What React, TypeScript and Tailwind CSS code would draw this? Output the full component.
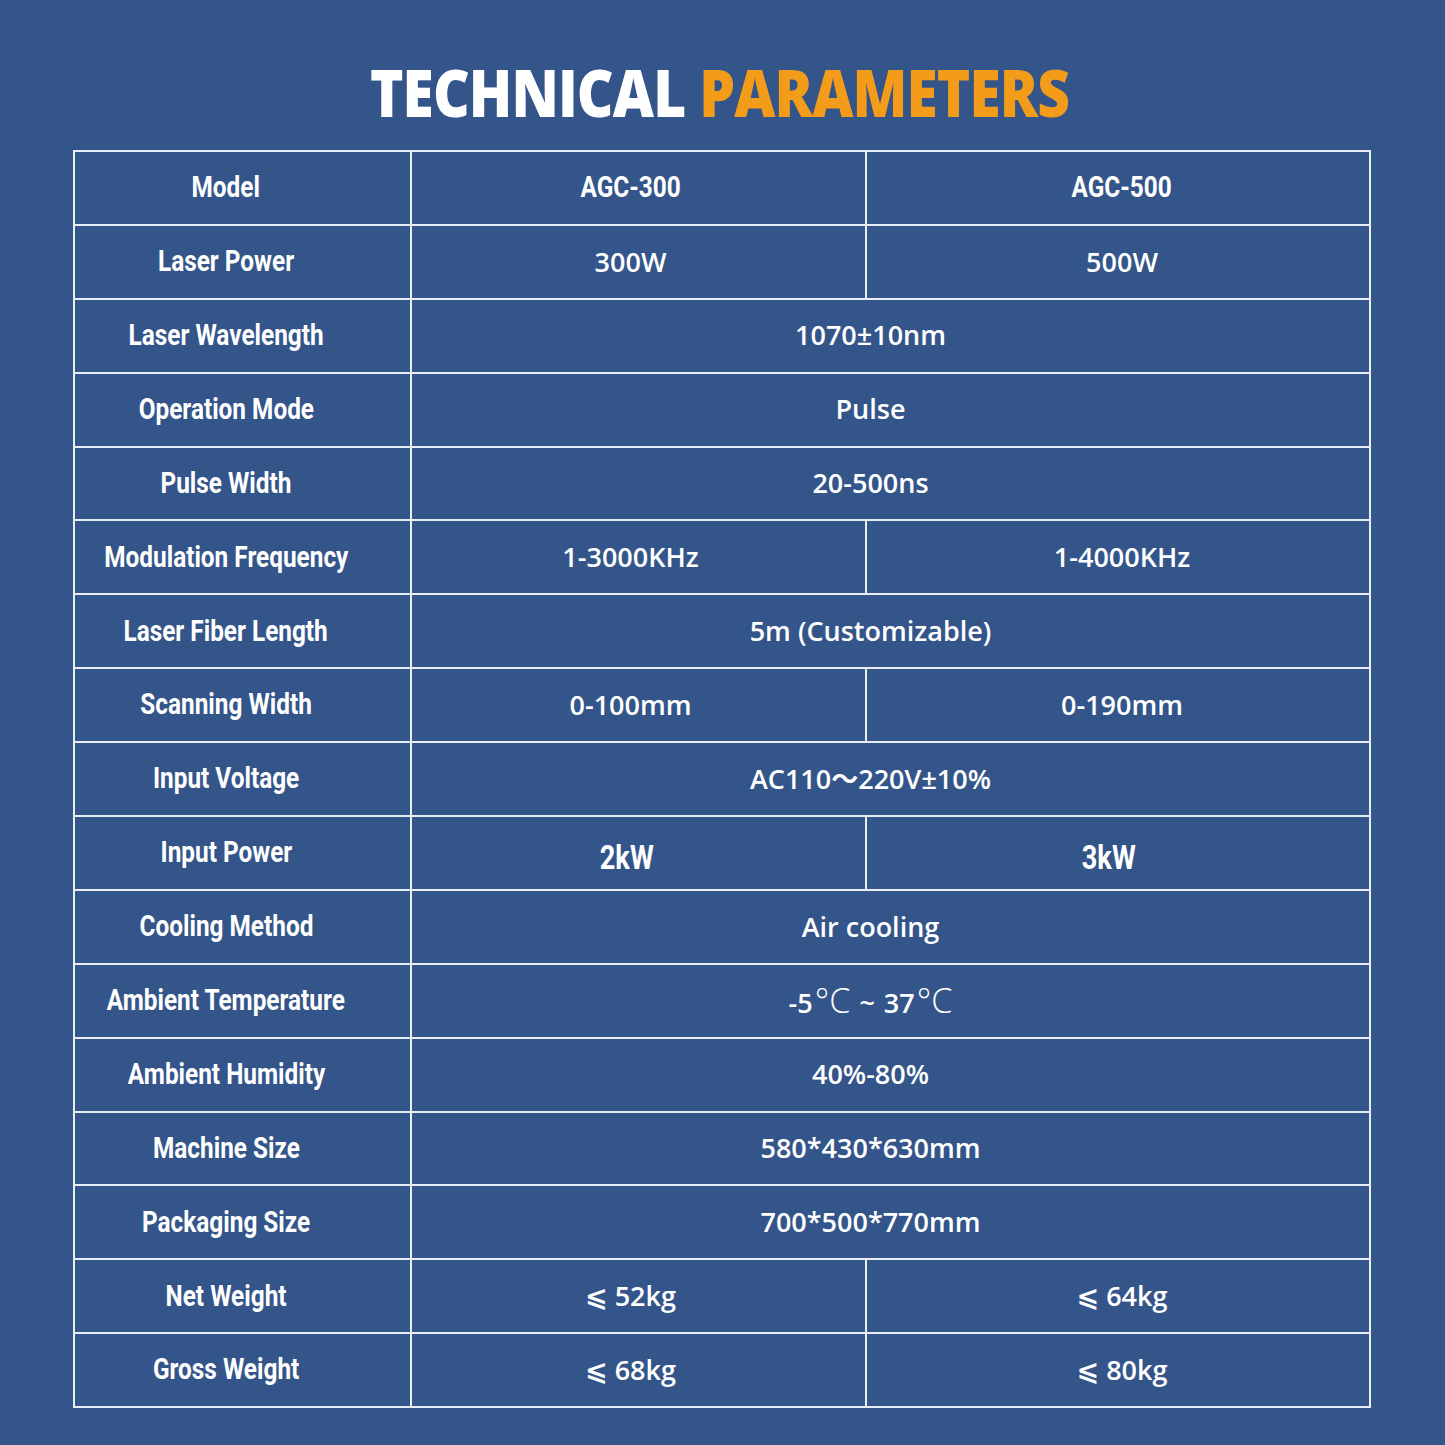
import type { ReactNode } from "react";

type Row = { label: string; a: ReactNode; b?: ReactNode; big?: boolean };

const deg = "font-['Open_Sans',sans-serif] font-light text-[34px] ml-[2px]";

const ROWS: Row[] = [
  { label: "Model", a: "AGC-300", b: "AGC-500" },
  { label: "Laser Power", a: "300W", b: "500W" },
  { label: "Laser Wavelength", a: "1070±10nm" },
  { label: "Operation Mode", a: "Pulse" },
  { label: "Pulse Width", a: "20-500ns" },
  { label: "Modulation Frequency", a: "1-3000KHz", b: "1-4000KHz" },
  { label: "Laser Fiber Length", a: "5m (Customizable)" },
  { label: "Scanning Width", a: "0-100mm", b: "0-190mm" },
  { label: "Input Voltage", a: "AC110～220V±10%" },
  { label: "Input Power", a: "2kW", b: "3kW", big: true },
  { label: "Cooling Method", a: "Air cooling" },
  {
    label: "Ambient Temperature",
    a: (
      <>
        -5<span className={deg}>°C</span>
        <span className="mx-[9px]">~</span>37<span className={deg}>°C</span>
      </>
    ),
  },
  { label: "Ambient Humidity", a: "40%-80%" },
  { label: "Machine Size", a: "580*430*630mm" },
  { label: "Packaging Size", a: "700*500*770mm" },
  { label: "Net Weight", a: "⩽ 52kg", b: "⩽ 64kg" },
  { label: "Gross Weight", a: "⩽ 68kg", b: "⩽ 80kg" },
];

const cond = "inline-block whitespace-nowrap font-['Roboto',sans-serif] font-bold";
const val =
  "font-['Open_Sans','Noto_Sans_CJK_SC','DejaVu_Sans',sans-serif] font-semibold text-[27px]";
const cell = "border-2 border-[#e8ecf3] p-0 text-center";

function Value({ row, v }: { row: Row; v: ReactNode }) {
  if (row.label === "Model") return <span className={`${cond} scale-x-[0.84] text-[29px]`}>{v}</span>;
  if (row.big) return <span className={`${cond} translate-y-[5px] scale-x-[0.8] text-[34px]`}>{v}</span>;
  return <>{v}</>;
}

export default function App() {
  return (
    <div className="min-h-[1445px] w-[1445px] bg-[#34558a] text-white">
      <h1 className="pt-[58px] pb-[26px] text-center leading-none">
        <span className="inline-block -translate-x-[3px] scale-x-[0.86] whitespace-nowrap font-['Open_Sans',sans-serif] text-[66px] font-extrabold tracking-[-1px]">
          TECHNICAL <span className="text-[#f39c19]">PARAMETERS</span>
        </span>
      </h1>

      <div className="ml-[73px] w-[1298px]">
        <table className="w-full table-fixed border-collapse border-2 border-[#e8ecf3]">
          <colgroup>
            <col className="w-[337px]" />
            <col className="w-[455px]" />
            <col />
          </colgroup>
          <tbody>
            {ROWS.map((r) => (
              <tr key={r.label} className="h-[73.9px]">
                <td className={`${cell} pr-[33px]`}>
                  <span className={`${cond} scale-x-[0.84] text-[29px]`}>{r.label}</span>
                </td>
                {r.b ? (
                  <>
                    <td className={`${cell} ${val} ${r.big ? "pr-[24px]" : "pr-[16px]"}`}>
                      <Value row={r} v={r.a} />
                    </td>
                    <td className={`${cell} ${val} ${r.big ? "pr-[18px]" : "pl-[8px]"}`}>
                      <Value row={r} v={r.b} />
                    </td>
                  </>
                ) : (
                  <td colSpan={2} className={`${cell} ${val} pr-[40px]`}>
                    {r.a}
                  </td>
                )}
              </tr>
            ))}
          </tbody>
        </table>
      </div>
    </div>
  );
}
